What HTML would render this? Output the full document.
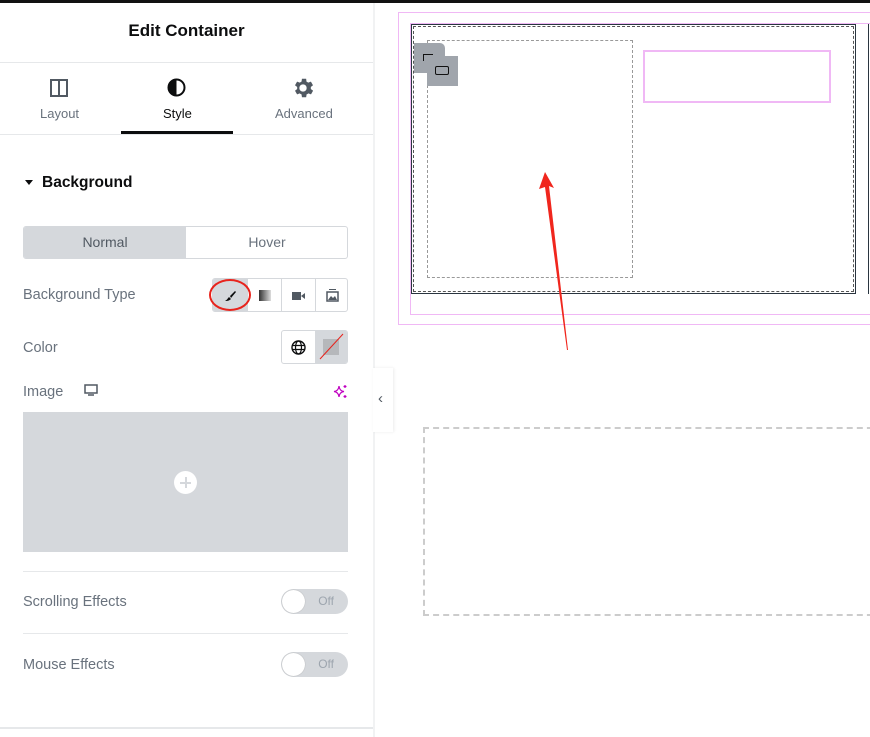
<!DOCTYPE html>
<html><head><style>
*{box-sizing:border-box;margin:0;padding:0}
body{width:870px;height:737px;overflow:hidden;background:#fff;font-family:"Liberation Sans",sans-serif;position:relative;color:#515962}
.a{position:absolute}
.lbl{position:absolute;left:23px;font-size:14.5px;color:#69727d}
.tog{position:absolute;left:281px;width:67px;height:25px;border-radius:13px;background:#d5d8dc}
.tog:before{content:"";position:absolute;left:1px;top:1px;width:23px;height:23px;border-radius:50%;background:#fff;box-shadow:0 0 1px #999}
.tog span{position:absolute;right:14px;top:5px;font-size:12px;color:#9da5ae}
.btn{position:absolute;top:0;height:33px;width:34px;border-left:1px solid #d5d8dc;display:flex;align-items:center;justify-content:center}
</style></head><body>
<div class="a" style="left:0;top:0;width:870px;height:3px;background:#111"></div>
<div class="a" style="left:373px;top:3px;width:2px;height:734px;background:#f1f2f3"></div>
<div class="a" style="left:0;top:21px;width:373px;text-align:center;font-weight:bold;font-size:17px;color:#0c0d0e">Edit Container</div>
<div class="a" style="left:0;top:62px;width:373px;height:1px;background:#e6e8ea"></div>
<svg class="a" style="left:50px;top:79px" width="18" height="18"><rect x="1" y="1" width="16" height="16" fill="none" stroke="#515962" stroke-width="2"/><line x1="9" y1="1" x2="9" y2="17" stroke="#515962" stroke-width="2"/></svg>
<svg class="a" style="left:167px;top:78px" width="19" height="19"><circle cx="9.5" cy="9.5" r="8" fill="none" stroke="#0c0d0e" stroke-width="2"/><path d="M9.5 1.5A8 8 0 0 0 9.5 17.5Z" fill="#0c0d0e"/></svg>
<svg class="a" style="left:293px;top:78px" width="20" height="20" viewBox="2.5 2.5 19 19"><path fill="#515962" d="M19.4 13a7.5 7.5 0 0 0 0-2l2.1-1.6-2-3.5-2.5 1a7.6 7.6 0 0 0-1.7-1L15 3.2h-4l-.4 2.7a7.6 7.6 0 0 0-1.7 1l-2.5-1-2 3.5L6.5 11a7.5 7.5 0 0 0 0 2l-2.1 1.6 2 3.5 2.5-1a7.6 7.6 0 0 0 1.7 1l.4 2.7h4l.4-2.7a7.6 7.6 0 0 0 1.7-1l2.5 1 2-3.5ZM12 15.5a3.5 3.5 0 1 1 0-7 3.5 3.5 0 0 1 0 7Z"/></svg>
<div class="a" style="left:40px;top:106px;font-size:13px;color:#69727d">Layout</div>
<div class="a" style="left:163px;top:106px;font-size:13px;color:#0c0d0e">Style</div>
<div class="a" style="left:275px;top:106px;font-size:13px;color:#69727d">Advanced</div>
<div class="a" style="left:121px;top:131px;width:112px;height:3px;background:#0c0d0e"></div>
<div class="a" style="left:0;top:134px;width:373px;height:1px;background:#e6e8ea"></div>
<div class="a" style="left:25px;top:180px;width:0;height:0;border-left:4.5px solid transparent;border-right:4.5px solid transparent;border-top:5px solid #0c0d0e"></div>
<div class="a" style="left:42px;top:174px;font-size:15.5px;font-weight:bold;color:#0c0d0e">Background</div>
<div class="a" style="left:23px;top:226px;width:325px;height:33px;border:1px solid #d5d8dc;border-radius:3px;overflow:hidden">
<div class="a" style="left:0;top:0;width:162px;height:31px;background:#d5d8dc;text-align:center;line-height:31px;font-size:14px;color:#515962">Normal</div>
<div class="a" style="left:162px;top:0;width:162px;height:31px;text-align:center;line-height:31px;font-size:14px;color:#69727d">Hover</div></div>
<div class="lbl" style="top:287px">Background Type</div>
<div class="a" style="left:212px;top:278px;width:136px;height:34px;border:1px solid #d5d8dc;border-radius:3px;overflow:hidden">
<div class="btn" style="left:0;border:0;background:#d5d8dc"><svg width="14" height="12"><path d="M2 11C4 10 5 8 6 7L8 9C6 11 4 11 2 11Z M7 6L12 1L13 2L8 8Z" fill="#0c0d0e"/></svg></div>
<div class="btn" style="left:34px"><div style="width:12px;height:11px;background:linear-gradient(90deg,#333,#ddd)"></div></div>
<div class="btn" style="left:68px"><svg width="14" height="10"><rect x="0" y="1" width="9" height="8" fill="#515962"/><path d="M9 5L13 2V8Z" fill="#515962"/></svg></div>
<div class="btn" style="left:102px"><svg width="13" height="13"><rect x="1" y="3" width="11" height="9" fill="none" stroke="#515962" stroke-width="1.5"/><path d="M3 0.5H10" stroke="#515962"/><path d="M2 11L5 7L7 9L9 7L11 11Z" fill="#515962"/></svg></div>
</div>
<div class="a" style="left:209px;top:279px;width:42px;height:32px;border:2.5px solid #e8231c;border-radius:50%"></div>
<div class="lbl" style="top:340px">Color</div>
<div class="a" style="left:281px;top:330px;width:67px;height:34px;border:1px solid #d5d8dc;border-radius:3px;overflow:hidden">
<svg class="a" style="left:9px;top:9px" width="15" height="15"><circle cx="7.5" cy="7.5" r="6.5" fill="none" stroke="#0c0d0e" stroke-width="1.4"/><ellipse cx="7.5" cy="7.5" rx="3" ry="6.5" fill="none" stroke="#0c0d0e" stroke-width="1.2"/><path d="M1 5.5H14M1 9.5H14" stroke="#0c0d0e" stroke-width="1.2"/></svg>
<div class="a" style="left:33px;top:0;width:33px;height:32px;background:#d5d8dc"><div class="a" style="left:8px;top:8px;width:16px;height:16px;background:#b6b8bb"></div><svg class="a" style="left:0;top:0" width="33" height="32"><line x1="5" y1="28" x2="28" y2="3" stroke="#e8231c" stroke-width="1"/></svg></div></div>
<div class="lbl" style="top:384px">Image</div>
<svg class="a" style="left:84px;top:384px" width="14" height="12"><rect x="1" y="1" width="12" height="8" fill="none" stroke="#515962" stroke-width="1.5"/><path d="M4 11H10" stroke="#515962" stroke-width="1.5"/></svg>
<svg class="a" style="left:333px;top:384px" width="15" height="15"><path d="M6 2Q6.5 7 11 7.5Q6.5 8 6 13Q5.5 8 1 7.5Q5.5 7 6 2Z" fill="none" stroke="#c000c0" stroke-width="1.2"/><path d="M12 1V4M10.5 2.5H13.5M12 11V14M10.5 12.5H13.5" stroke="#c000c0" stroke-width="1.2"/></svg>
<div class="a" style="left:23px;top:412px;width:325px;height:140px;background:#d5d8dc"></div>
<div class="a" style="left:174px;top:471px;width:23px;height:23px;border-radius:50%;background:#fff"></div>
<div class="a" style="left:180px;top:481.5px;width:11px;height:2px;background:#d5d8dc"></div>
<div class="a" style="left:184.5px;top:477px;width:2px;height:11px;background:#d5d8dc"></div>
<div class="a" style="left:23px;top:571px;width:325px;height:1px;background:#e6e8ea"></div>
<div class="lbl" style="top:594px">Scrolling Effects</div>
<div class="tog" style="top:589px"><span>Off</span></div>
<div class="a" style="left:23px;top:633px;width:325px;height:1px;background:#e6e8ea"></div>
<div class="lbl" style="top:657px">Mouse Effects</div>
<div class="tog" style="top:652px"><span>Off</span></div>
<div class="a" style="left:0;top:727px;width:373px;height:2px;background:#e6e8ea"></div>
<div class="a" style="left:373px;top:368px;width:20px;height:64px;background:#fff;box-shadow:1px 0 3px rgba(0,0,0,.08)"></div>
<div class="a" style="left:378px;top:390px;font-size:15px;color:#515962">‹</div>
<div class="a" style="left:398px;top:12px;width:480px;height:313px;border:1px solid #f0b8f5"></div>
<div class="a" style="left:410px;top:23px;width:470px;height:292px;border:1px solid #f0b8f5"></div>
<div class="a" style="left:411px;top:24px;width:445px;height:270px;border:1px solid #2a3540"></div>
<div class="a" style="left:413px;top:26px;width:441px;height:266px;border:1px dashed #555"></div>
<div class="a" style="left:868px;top:24px;width:4px;height:270px;border-left:1px solid #2a3540"></div>
<div class="a" style="left:427px;top:40px;width:206px;height:238px;border:1px dashed #999"></div>
<div class="a" style="left:643px;top:50px;width:188px;height:53px;border:2px solid #f0b8f5"></div>
<div class="a" style="left:414px;top:43px;width:31px;height:30px;background:#a0a5ac;border-radius:0 5px 0 0"></div>
<div class="a" style="left:423px;top:54px;width:10px;height:7px;border:1px solid #111;border-right:0;border-bottom:0"></div>
<div class="a" style="left:427px;top:56px;width:31px;height:30px;background:#a0a5ac"></div>
<div class="a" style="left:435px;top:66px;width:14px;height:9px;border:1.5px solid #111;border-radius:2px"></div>
<svg class="a" style="left:530px;top:165px" width="50" height="190"><path d="M15 7L24 23L19 21L38 185L37 185L15 22L9 24Z" fill="#f0261d"/></svg>
<div class="a" style="left:423px;top:427px;width:460px;height:189px;border:2px dashed #ccc"></div>
</body></html>
